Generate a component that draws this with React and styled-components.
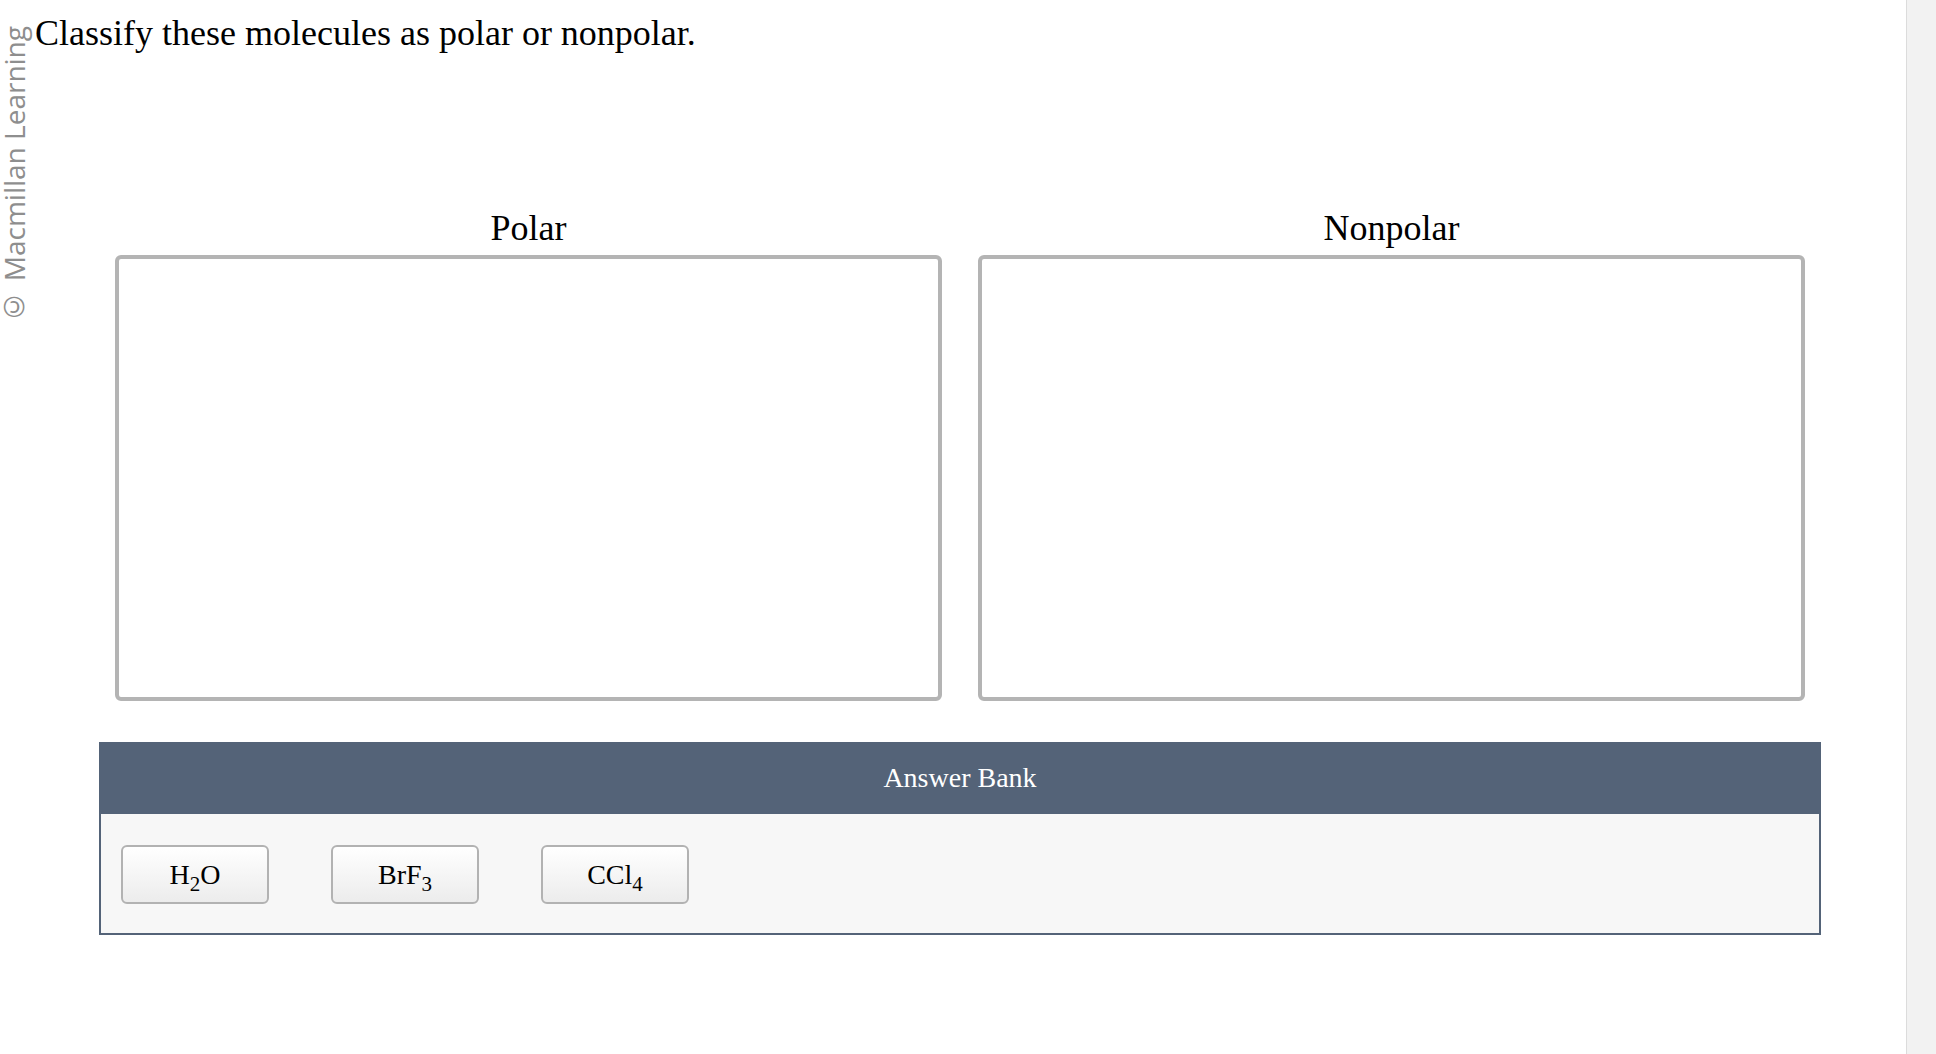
import React from 'react';
import styled, { createGlobalStyle } from 'styled-components';

const GlobalStyle = createGlobalStyle`
    html, body {
        margin: 0;
        padding: 0;
        background: #ffffff;
    }
    body {
        font-family: "Liberation Serif", "Times New Roman", serif;
        color: #000000;
    }
`;

const Page = styled.div`
    display: flex;
    height: 100vh;
    overflow: hidden;
`;

const Main = styled.div`
    flex: 1;
    display: flex;
    min-width: 0;
`;

const Gutter = styled.div`
    width: 35px;
    flex-shrink: 0;
    padding-top: 26px;
    box-sizing: border-box;
`;

const Watermark = styled.div`
    writing-mode: vertical-rl;
    transform: rotate(180deg);
    font-family: "Open Sans", "Liberation Sans", sans-serif;
    font-size: 28px;
    line-height: 28px;
    color: #8e8e8e;
    white-space: nowrap;
`;

const Content = styled.div`
    flex: 1;
    padding-top: 13px;
`;

const Heading = styled.h1`
    margin: 0;
    font-size: 36px;
    font-weight: normal;
    line-height: 40px;
`;

const Area = styled.div`
    margin-left: 64px;
    margin-top: 155px;
    width: 1722px;
`;

const Zones = styled.div`
    display: grid;
    grid-template-columns: 1fr 1fr;
    column-gap: 36px;
    padding: 0 16px;
`;

const Zone = styled.section`
    display: flex;
    flex-direction: column;
`;

const ZoneLabel = styled.div`
    text-align: center;
    font-size: 36px;
    line-height: 40px;
    margin-bottom: 7px;
`;

const DropBox = styled.div`
    height: 446px;
    box-sizing: border-box;
    border: 4px solid #b4b4b4;
    border-radius: 6px;
    background: #ffffff;
`;

const Bank = styled.div`
    margin-top: 41px;
`;

const BankHead = styled.div`
    height: 72px;
    display: flex;
    align-items: center;
    justify-content: center;
    background: #546378;
    color: #ffffff;
    font-size: 28px;
`;

const BankBody = styled.div`
    display: flex;
    column-gap: 62px;
    padding: 31px 20px 29px;
    background: #f7f7f7;
    border: 2px solid #546378;
    border-top: none;
`;

const Chip = styled.div`
    width: 148px;
    height: 59px;
    box-sizing: border-box;
    display: flex;
    align-items: center;
    justify-content: center;
    border: 2px solid #b2b2b2;
    border-radius: 6px;
    background: linear-gradient(#ffffff, #ececec);
    font-size: 28px;
`;

const Formula = styled.span`
    line-height: 1;

    sub {
        font-size: 0.75em;
        vertical-align: -0.35em;
        line-height: 0;
    }
`;

const Scrollbar = styled.div`
    width: 30px;
    flex-shrink: 0;
    background: #f2f2f2;
    border-left: 1px solid #dcdcdc;
    box-sizing: border-box;
`;

const molecules = [
    { id: 'h2o', label: <>H<sub>2</sub>O</> },
    { id: 'brf3', label: <>BrF<sub>3</sub></> },
    { id: 'ccl4', label: <>CCl<sub>4</sub></> },
];

export default function App() {
    return (
        <>
            <GlobalStyle />
            <Page>
                <Main>
                    <Gutter>
                        <Watermark>© Macmillan Learning</Watermark>
                    </Gutter>
                    <Content>
                        <Heading>Classify these molecules as polar or nonpolar.</Heading>
                        <Area>
                            <Zones>
                                <Zone>
                                    <ZoneLabel>Polar</ZoneLabel>
                                    <DropBox />
                                </Zone>
                                <Zone>
                                    <ZoneLabel>Nonpolar</ZoneLabel>
                                    <DropBox />
                                </Zone>
                            </Zones>
                            <Bank>
                                <BankHead>Answer Bank</BankHead>
                                <BankBody>
                                    {molecules.map((m) => (
                                        <Chip key={m.id}>
                                            <Formula>{m.label}</Formula>
                                        </Chip>
                                    ))}
                                </BankBody>
                            </Bank>
                        </Area>
                    </Content>
                </Main>
                <Scrollbar />
            </Page>
        </>
    );
}
